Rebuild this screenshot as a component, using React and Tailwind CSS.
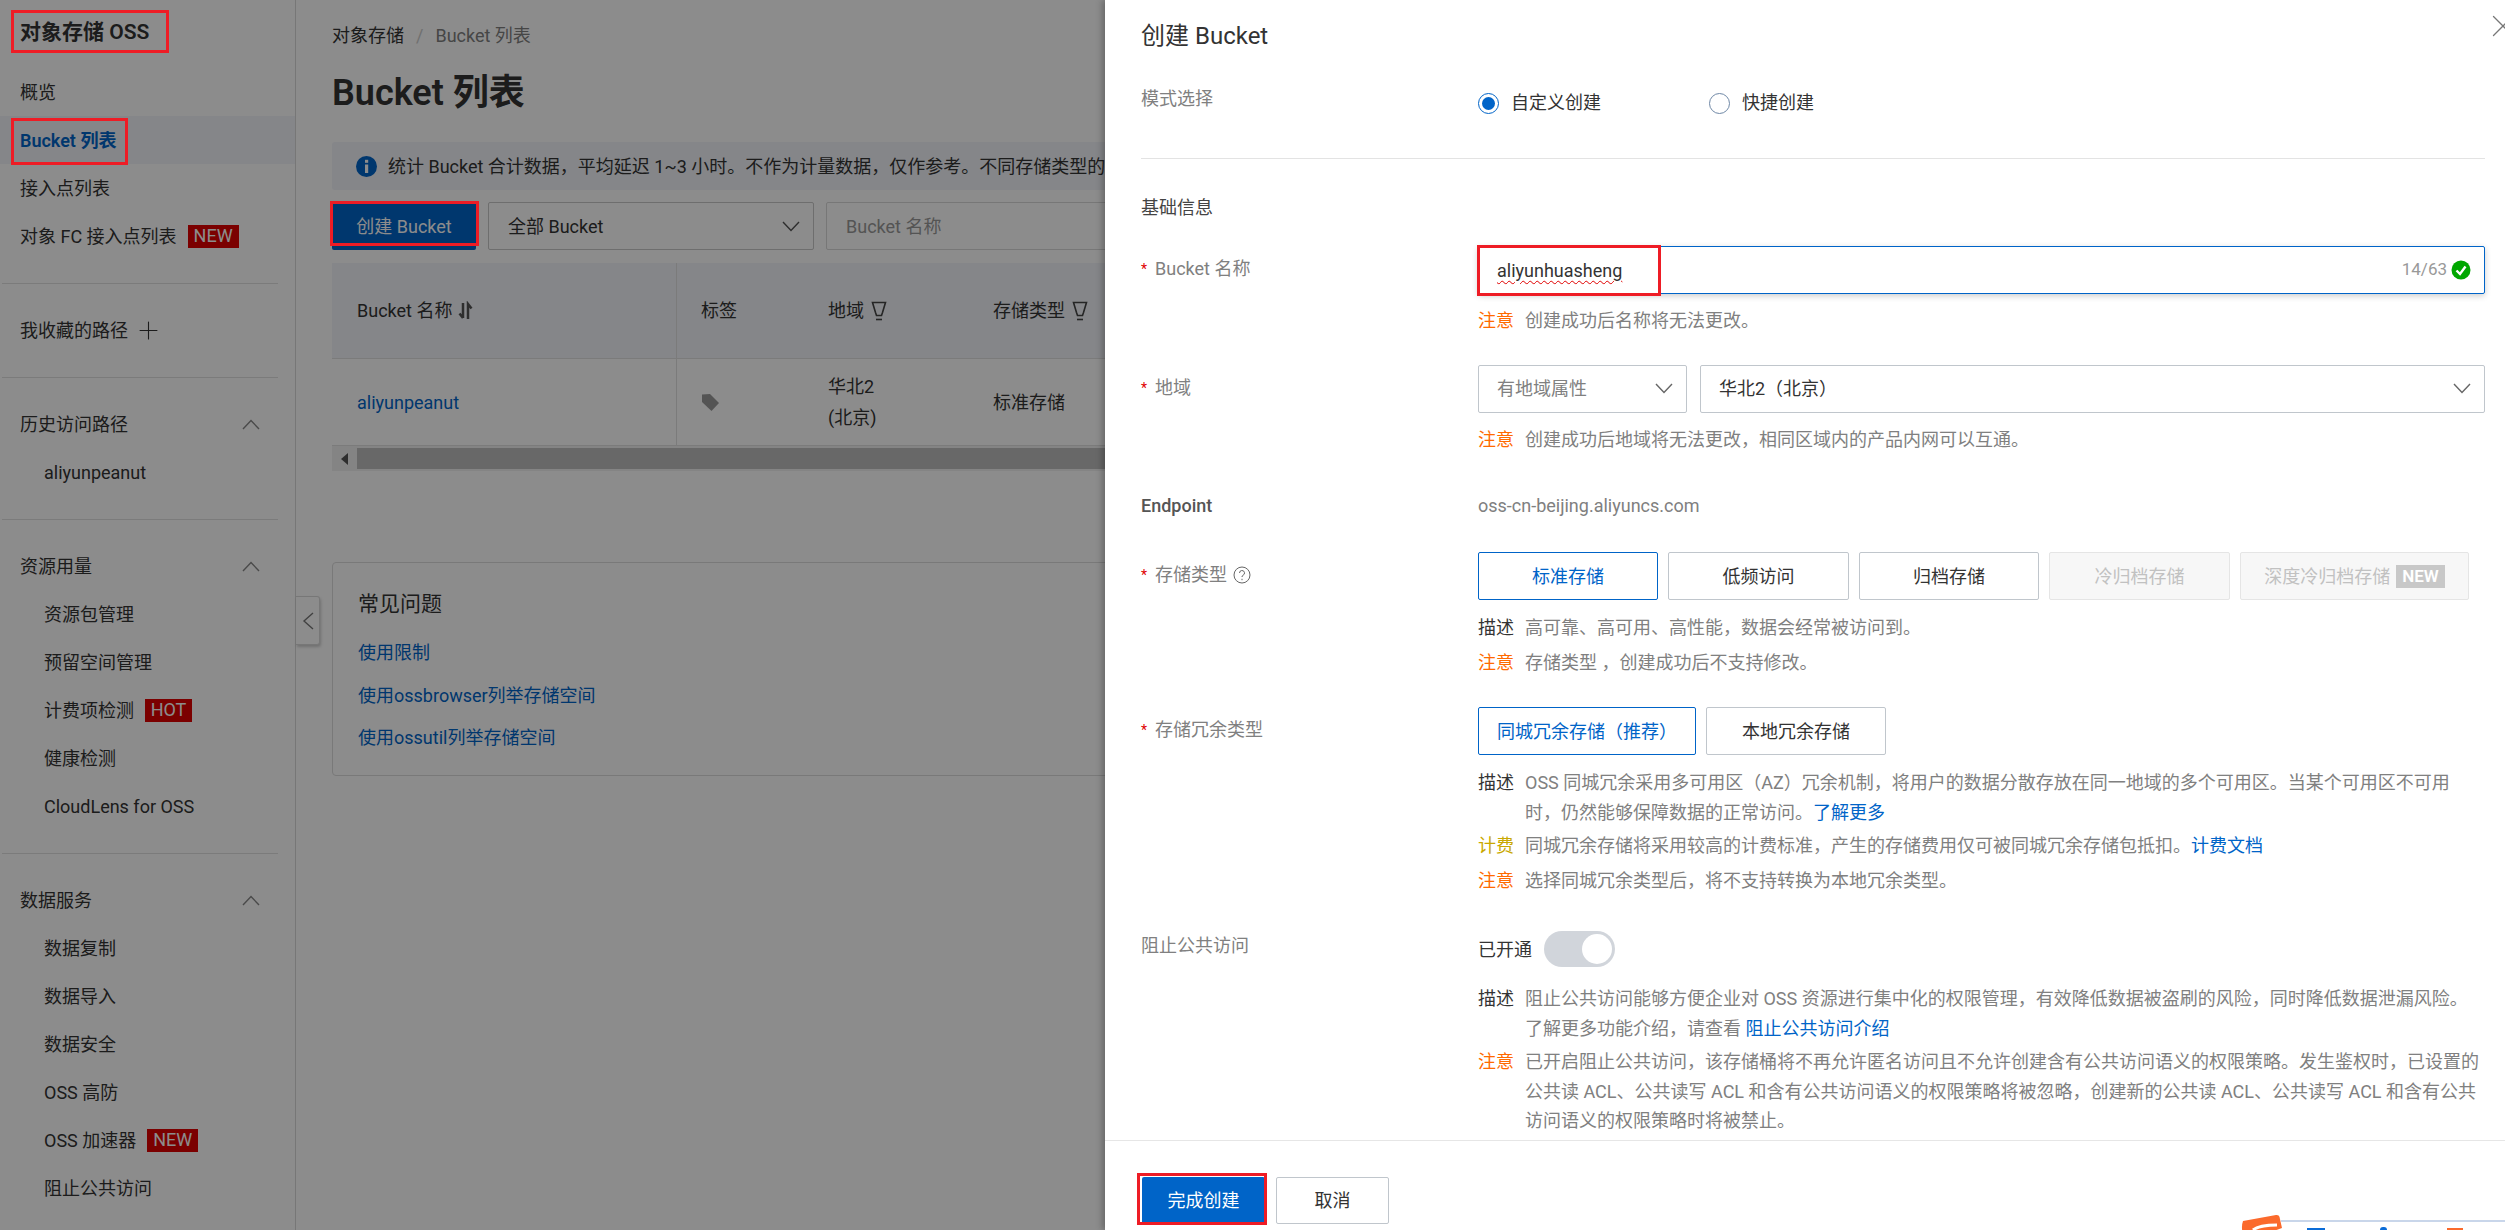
import { Plus, X } from "lucide-react";

const FONT = "[font-family:'Roboto','Noto_Sans_CJK_SC',sans-serif]";

function Chevron({ up, className }) {
  return (
    <svg width="18" height="11" viewBox="0 0 18 11" fill="none" stroke="currentColor" strokeWidth="1.4" className={`shrink-0 ${className}`}>
      <path d={up ? "M1 10l8-8.500 8 8.500" : "M1 1l8 8.500 8-8.500"} />
    </svg>
  );
}

function Badge({ children, className }) {
  return (
    <span className={`ml-[11px] inline-flex h-[23px] items-center justify-center bg-[#e00000] text-[18px] leading-none text-white ${className}`}>
      {children}
    </span>
  );
}

function NavItem({ children, sub, active, badge }) {
  return (
    <div
      className={`flex h-[48px] items-center text-[18px] ${sub ? "pl-[44px]" : "pl-[20px]"} ${
        active ? "bg-[#f2f4f9] font-semibold text-[#0064c8]" : "text-[#333]"
      }`}
    >
      {children}
      {badge && <Badge className={badge === "HOT" ? "w-[47px]" : "w-[51px]"}>{badge}</Badge>}
    </div>
  );
}

function NavGroup({ title }) {
  return (
    <div className="flex h-[48px] items-center justify-between pl-[20px] pr-[35px] text-[18px] text-[#333]">
      {title}
      <Chevron up className="text-[#888]" />
    </div>
  );
}

function Divider() {
  return <div className="my-[22.5px] ml-[2px] h-px w-[276px] bg-[#e0e0e0]" />;
}

function Sidebar() {
  return (
    <aside className="h-full w-[296px] shrink-0 border-r border-[#d9d9d9] bg-white">
      <div className="flex h-[68px] items-start pl-[20px] pt-[17px] text-[21px] font-semibold leading-[30px] text-[#333]">
        对象存储 OSS
      </div>
      <NavItem>概览</NavItem>
      <NavItem active>Bucket 列表</NavItem>
      <NavItem>接入点列表</NavItem>
      <NavItem badge="NEW">对象 FC 接入点列表</NavItem>
      <Divider />
      <div className="flex h-[48px] items-center pl-[20px] text-[18px] text-[#333]">
        我收藏的路径
        <Plus size={29} strokeWidth={0.9} className="ml-[6px]" />
      </div>
      <Divider />
      <NavGroup title="历史访问路径" />
      <NavItem sub>aliyunpeanut</NavItem>
      <Divider />
      <NavGroup title="资源用量" />
      <NavItem sub>资源包管理</NavItem>
      <NavItem sub>预留空间管理</NavItem>
      <NavItem sub badge="HOT">计费项检测</NavItem>
      <NavItem sub>健康检测</NavItem>
      <NavItem sub>CloudLens for OSS</NavItem>
      <Divider />
      <NavGroup title="数据服务" />
      <NavItem sub>数据复制</NavItem>
      <NavItem sub>数据导入</NavItem>
      <NavItem sub>数据安全</NavItem>
      <NavItem sub>OSS 高防</NavItem>
      <NavItem sub badge="NEW">OSS 加速器</NavItem>
      <NavItem sub>阻止公共访问</NavItem>
    </aside>
  );
}

function FilterIcon() {
  return (
    <svg width="16" height="20" viewBox="0 0 16 20" fill="none" stroke="#444" strokeWidth="1.6" className="ml-[7px]">
      <path d="M1.500 1.500h13l-3 10-1 3h-5l-1-3z" />
      <path d="M5 18.500h6" />
    </svg>
  );
}

function MainContent() {
  return (
    <main className="min-w-0 flex-1 pl-[36px] text-[18px] text-[#333]">
      <div className="mt-[20px] flex h-[30px] items-center">
        <span className="text-[#333]">对象存储</span>
        <span className="mx-[12px] text-[#ccc]">/</span>
        <span className="text-[#808080]">Bucket 列表</span>
      </div>
      <h1 className="mt-[18px] text-[36px] font-semibold leading-[50px] text-[#333]">Bucket 列表</h1>
      <div className="mt-[24px] flex h-[48px] w-[1000px] items-center whitespace-nowrap rounded-[3px] bg-[#f2f4f9] pl-[24px]">
        <svg width="21" height="21" viewBox="0 0 21 21" className="mr-[11px] shrink-0">
          <circle cx="10.500" cy="10.500" r="10.500" fill="#0064c8" />
          <rect x="9" y="8.500" width="3.200" height="8.500" fill="#fff" />
          <rect x="9" y="3.800" width="3.200" height="3" fill="#fff" />
        </svg>
        统计 Bucket 合计数据，平均延迟 1~3 小时。不作为计量数据，仅作参考。不同存储类型的计量
      </div>
      <div className="mt-[12px] flex h-[48px]">
        <button className="h-[48px] w-[144px] rounded-[2px] bg-[#0064c8] text-white">创建 Bucket</button>
        <div className="ml-[12px] flex h-[48px] w-[326px] items-center justify-between rounded-[2px] border border-[#c8c8c8] pl-[19px] pr-[13px]">
          全部 Bucket
          <Chevron className="text-[#555]" />
        </div>
        <div className="ml-[12px] flex h-[48px] w-[400px] items-center rounded-[2px] border border-[#d9d9d9] pl-[19px] text-[#999]">
          Bucket 名称
        </div>
      </div>
      <div className="mt-[13px] w-[1000px] overflow-hidden">
        <div className="flex h-[96px] items-center border-b border-[#e0e0e0] bg-[#f2f4f9]">
          <div className="flex h-full w-[345px] items-center border-r border-[#e0e0e0] pl-[25px]">
            Bucket 名称
            <svg width="16" height="20" viewBox="0 0 16 20" fill="none" stroke="#555" strokeWidth="2.500" className="ml-[6px]">
              <path d="M5 2v15M1.500 12.500 5 17" />
              <path d="M10 18V3l3.500 4.500" />
            </svg>
          </div>
          <div className="w-[127px] pl-[24px]">标签</div>
          <div className="flex w-[165px] items-center pl-[24px]">
            地域
            <FilterIcon />
          </div>
          <div className="flex items-center pl-[24px]">
            存储类型
            <FilterIcon />
          </div>
        </div>
        <div className="flex h-[87px] items-center border-b border-[#e0e0e0]">
          <div className="flex h-full w-[345px] items-center border-r border-[#e0e0e0] pl-[25px] text-[#0064c8]">
            aliyunpeanut
          </div>
          <div className="w-[127px] pl-[24px]">
            <svg width="19" height="19" viewBox="0 0 19 19" fill="#9a9a9a">
              <path d="M1 1.500 9 1l9 9-7.500 8-9.500-9z" />
            </svg>
          </div>
          <div className="w-[165px] pl-[24px] leading-[31px]">
            华北2
            <br />
            (北京)
          </div>
          <div className="pl-[24px]">标准存储</div>
        </div>
        <div className="flex h-[25px] items-center bg-[#f1f1f1]">
          <div className="flex w-[25px] justify-center">
            <span className="h-0 w-0 border-y-[6px] border-r-[7px] border-y-transparent border-r-[#555]" />
          </div>
          <div className="h-[21px] flex-1 bg-[#bdbdbd]" />
        </div>
      </div>
      <section className="mt-[91px] h-[214px] w-[1000px] rounded-[4px] border border-[#dcdcdc] pl-[25px]">
        <h2 className="mt-[26px] text-[21px] leading-[30px]">常见问题</h2>
        <div className="mt-[19px] flex flex-col gap-[12.5px] leading-[30px] text-[#0064c8]">
          <a>使用限制</a>
          <a>使用ossbrowser列举存储空间</a>
          <a>使用ossutil列举存储空间</a>
        </div>
      </section>
    </main>
  );
}

function Label({ children, required }) {
  return (
    <div className="flex w-[337px] shrink-0 items-center self-start pt-[8px] leading-[30px] text-[#808080]">
      {required && <span className="mr-[8px] text-[14px] text-[#e00000]">*</span>}
      {children}
    </div>
  );
}

function Note({ tag, color, children }) {
  return (
    <div className="flex whitespace-nowrap pl-[337px] leading-[29.5px]">
      <span className={`w-[47px] shrink-0 ${color}`}>{tag}</span>
      <div className="text-[#808080]">{children}</div>
    </div>
  );
}

function SelectBox({ children, className }) {
  return (
    <div className={`flex h-[48px] items-center justify-between rounded-[2px] border border-[#c0c6cc] pr-[13px] ${className}`}>
      {children}
      <Chevron className="text-[#666]" />
    </div>
  );
}

function Choice({ children, active, disabled, className }) {
  let tone = "border-[#c0c6cc] text-[#333] bg-white";
  if (active) tone = "border-[#0064c8] text-[#0064c8] bg-white";
  if (disabled) tone = "border-[#e5e5e5] text-[#c1c1c1] bg-[#f7f7f7]";
  return (
    <div className={`flex h-[48px] items-center justify-center whitespace-nowrap rounded-[2px] border ${tone} ${className}`}>
      {children}
    </div>
  );
}

function Radio({ checked }) {
  return (
    <span className={`flex h-[21px] w-[21px] items-center justify-center rounded-full border ${checked ? "border-[#0064c8]" : "border-[#6f88a6]"}`}>
      {checked && <span className="h-[13px] w-[13px] rounded-full bg-[#0064c8]" />}
    </span>
  );
}

function Drawer() {
  return (
    <div className="absolute right-0 top-0 flex h-full w-[1400px] flex-col bg-white text-[18px] text-[#333] shadow-[-3px_0_6px_rgba(0,0,0,0.25)]">
      <div className="min-h-0 flex-1 overflow-hidden pl-[36px] pr-[20px]">
        <h2 className="pt-[21px] text-[24px] leading-[30px] text-[#333]">创建 Bucket</h2>

        <div className="mt-[33px] flex">
          <div className="w-[337px] shrink-0 leading-[30px] text-[#808080]">模式选择</div>
          <div className="flex items-center pt-[4px] leading-[30px]">
            <Radio checked />
            <span className="ml-[12px] w-[198px]">自定义创建</span>
            <Radio />
            <span className="ml-[12px]">快捷创建</span>
          </div>
        </div>
        <div className="mt-[40px] h-px w-[1344px] bg-[#e3e3e3]" />
        <div className="mt-[34px] leading-[30px] text-[#444]">基础信息</div>

        <div className="mt-[23px] flex">
          <Label required>Bucket 名称</Label>
          <div className="flex h-[48px] w-[1007px] items-center rounded-[2px] border border-[#0064c8] pl-[18px] pr-[11px] shadow-[0_2px_6px_rgba(0,0,0,0.2)]">
            <span className="underline decoration-wavy decoration-[#e00000] decoration-1 underline-offset-[3px]">aliyunhuasheng</span>
            <span className="ml-auto text-[17px] text-[#999]">14/63</span>
            <svg width="20" height="20" viewBox="0 0 20 20" className="ml-[4px] mr-[2px]">
              <circle cx="10" cy="10" r="9.500" fill="#00a700" />
              <path d="M5.500 10.500 9 14l5.500-7.500" fill="none" stroke="#fff" strokeWidth="2.400" />
            </svg>
          </div>
        </div>
        <div className="mt-[12px]">
          <Note tag="注意" color="text-[#ff6a00]">创建成功后名称将无法更改。</Note>
        </div>

        <div className="mt-[29px] flex">
          <Label required>地域</Label>
          <SelectBox className="w-[209px] pl-[18px] text-[#808080]">有地域属性</SelectBox>
          <SelectBox className="ml-[13px] w-[785px] pl-[18px]">华北2（北京）</SelectBox>
        </div>
        <div className="mt-[12px]">
          <Note tag="注意" color="text-[#ff6a00]">创建成功后地域将无法更改，相同区域内的产品内网可以互通。</Note>
        </div>

        <div className="mt-[37px] flex leading-[30px]">
          <div className="w-[337px] shrink-0 font-medium text-[#555]">Endpoint</div>
          <div className="text-[#808080]">oss-cn-beijing.aliyuncs.com</div>
        </div>

        <div className="mt-[31px] flex">
          <Label required>
            存储类型
            <svg width="18" height="18" viewBox="0 0 18 18" fill="none" stroke="#666" className="ml-[6px]">
              <circle cx="9" cy="9" r="8" />
              <path d="M6.500 7a2.500 2.500 0 1 1 3.500 2.300c-.7.4-1 .8-1 1.700" />
              <path d="M9 12.800v1.400" />
            </svg>
          </Label>
          <div className="flex gap-[10px]">
            <Choice active className="w-[180px]">标准存储</Choice>
            <Choice className="w-[181px]">低频访问</Choice>
            <Choice className="w-[180px]">归档存储</Choice>
            <Choice disabled className="w-[181px]">冷归档存储</Choice>
            <Choice disabled className="w-[229px]">
              深度冷归档存储
              <span className="ml-[6px] bg-[#c8c8c8] px-[6px] text-[17px] font-semibold leading-[23px] text-white">NEW</span>
            </Choice>
          </div>
        </div>
        <div className="mt-[13px]">
          <Note tag="描述" color="text-[#333]">高可靠、高可用、高性能，数据会经常被访问到。</Note>
        </div>
        <div className="mt-[5px]">
          <Note tag="注意" color="text-[#ff6a00]">存储类型 ，创建成功后不支持修改。</Note>
        </div>

        <div className="mt-[30px] flex">
          <Label required>存储冗余类型</Label>
          <div className="flex gap-[10px]">
            <Choice active className="w-[218px]">同城冗余存储（推荐）</Choice>
            <Choice className="w-[180px]">本地冗余存储</Choice>
          </div>
        </div>
        <div className="mt-[13px]">
          <Note tag="描述" color="text-[#333]">
            OSS 同城冗余采用多可用区（AZ）冗余机制，将用户的数据分散存放在同一地域的多个可用区。当某个可用区不可用
            <br />
            时，仍然能够保障数据的正常访问。<span className="text-[#0064c8]">了解更多</span>
          </Note>
        </div>
        <div className="mt-[4px]">
          <Note tag="计费" color="text-[#c9a800]">
            同城冗余存储将采用较高的计费标准，产生的存储费用仅可被同城冗余存储包抵扣。<span className="text-[#0064c8]">计费文档</span>
          </Note>
        </div>
        <div className="mt-[5px]">
          <Note tag="注意" color="text-[#ff6a00]">选择同城冗余类型后，将不支持转换为本地冗余类型。</Note>
        </div>

        <div className="mt-[36px] flex">
          <div className="w-[337px] shrink-0 leading-[30px] text-[#808080]">阻止公共访问</div>
          <div className="flex h-[36px] items-center">
            <span>已开通</span>
            <span className="ml-[12px] flex h-[36px] w-[71px] justify-end rounded-full bg-[#d1d5db] p-[3px]">
              <span className="h-[30px] w-[30px] rounded-full bg-white" />
            </span>
          </div>
        </div>
        <div className="mt-[17px]">
          <Note tag="描述" color="text-[#333]">
            阻止公共访问能够方便企业对 OSS 资源进行集中化的权限管理，有效降低数据被盗刷的风险，同时降低数据泄漏风险。
            <br />
            了解更多功能介绍，请查看 <span className="text-[#0064c8]">阻止公共访问介绍</span>
          </Note>
        </div>
        <div className="mt-[4px]">
          <Note tag="注意" color="text-[#ff6a00]">
            已开启阻止公共访问，该存储桶将不再允许匿名访问且不允许创建含有公共访问语义的权限策略。发生鉴权时，已设置的
            <br />
            公共读 ACL、公共读写 ACL 和含有公共访问语义的权限策略将被忽略，创建新的公共读 ACL、公共读写 ACL 和含有公共
            <br />
            访问语义的权限策略时将被禁止。
          </Note>
        </div>
      </div>
      <div className="flex h-[90px] shrink-0 gap-[11px] border-t border-[#e6e6e6] pl-[37px] pt-[36px]">
        <button className="h-[47px] w-[123px] rounded-[2px] bg-[#0064c8] text-white">完成创建</button>
        <button className="h-[47px] w-[113px] rounded-[2px] border border-[#c0c6cc] bg-white">取消</button>
      </div>
      <X size={38} strokeWidth={0.8} className="absolute right-[-17px] top-[7px] text-[#777]" />
    </div>
  );
}

function FloatWidget() {
  return (
    <div className="absolute bottom-0 right-0 h-[16px] w-[264px] overflow-hidden">
      <div className="absolute bottom-0 left-[40px] right-0 h-[10px] border-t-2 border-[#c9d6ea] bg-white" />
      <span className="absolute bottom-0 left-[66px] h-[2px] w-[18px] bg-[#0a6cd8]" />
      <span className="absolute bottom-0 left-[139px] h-[3px] w-[7px] rounded-t-full bg-[#0a6cd8]" />
      <span className="absolute bottom-0 left-[206px] h-[2px] w-[16px] bg-[#fb6a2c]" />
      <svg width="42" height="26" viewBox="0 0 42 26" className="absolute left-0 top-0">
        <path d="M2 7 35 1c2-.3 3 .5 3.500 2L41 14 8 26H4C1 20 0 12 2 7z" fill="#fb6a2c" />
        <path d="M12 16c5-4 13-5 24-5" fill="none" stroke="#fff" strokeWidth="3" />
      </svg>
    </div>
  );
}

function Mark({ className }) {
  return <div className={`absolute border-[3px] border-[#ee1c25] ${className}`} />;
}

export default function App() {
  return (
    <div className={`relative h-[1230px] w-[2505px] overflow-hidden bg-white ${FONT}`}>
      <div className="flex h-full">
        <Sidebar />
        <MainContent />
      </div>
      <div className="absolute left-[296px] top-[596px] flex h-[49px] w-[24px] items-center justify-center rounded-r-[3px] border border-l-0 border-[#d9d9d9] bg-white shadow-[1px_2px_3px_rgba(0,0,0,0.2)]">
        <svg width="12" height="18" viewBox="0 0 12 18" fill="none" stroke="#777" strokeWidth="1.400">
          <path d="M11 1 2 9l9 8" />
        </svg>
      </div>
      <div className="absolute inset-0 bg-black/45" />
      <Drawer />
      <FloatWidget />
      <Mark className="left-[11px] top-[10px] h-[43px] w-[158px]" />
      <Mark className="left-[11px] top-[118px] h-[47px] w-[117px]" />
      <Mark className="left-[330px] top-[201px] h-[45px] w-[149px]" />
      <Mark className="left-[1477px] top-[245px] h-[51px] w-[184px]" />
      <Mark className="left-[1137px] top-[1173px] h-[52px] w-[130px]" />
    </div>
  );
}
